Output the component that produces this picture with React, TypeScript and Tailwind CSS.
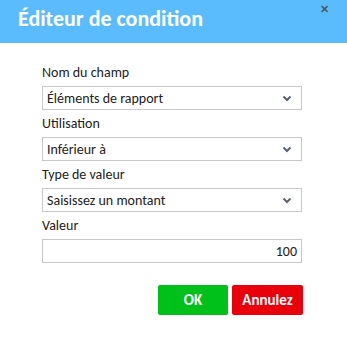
import React from 'react';

const font = { fontFamily: 'Carlito, Lato, "Open Sans", sans-serif' };

function Chevron() {
  return (
    <svg width="10" height="7" viewBox="0 0 10 7" className="text-[#5a6470]">
      <path d="M1.5 1.5 L5 5 L8.5 1.5" fill="none" stroke="currentColor" strokeWidth="2" />
    </svg>
  );
}

function SelectField({ label, value }: { label: string; value: string }) {
  return (
    <div className="flex flex-col">
      <div className="h-[22px] text-[14px] leading-[22px] text-[#222]">{label}</div>
      <div className="mt-[2px] h-[24px] border border-[#c8c8c8] bg-white flex items-center justify-between pl-[4px] pr-[9px]">
        <span className="text-[14px] text-[#222]">{value}</span>
        <Chevron />
      </div>
    </div>
  );
}

export default function App() {
  return (
    <div className="w-[347px] h-[343px] bg-white overflow-hidden" style={font}>
      <header className="h-[43px] bg-[#5bbcfd] flex items-start justify-between pl-[18px] pr-[18px]">
        <h1 className="text-[22px] font-bold text-white leading-none mt-[8px]">Éditeur de condition</h1>
        <span className="text-[#4a5a68] text-[11px] font-bold leading-none mt-[4px]">✕</span>
      </header>
      <div className="ml-[42px] pt-[19px] flex flex-col gap-[3px] w-[260px]">
        <SelectField label="Nom du champ" value="Éléments de rapport" />
        <SelectField label="Utilisation" value="Inférieur à" />
        <SelectField label="Type de valeur" value="Saisissez un montant" />
        <div className="flex flex-col">
          <div className="h-[22px] text-[14px] leading-[22px] text-[#222]">Valeur</div>
          <div className="mt-[2px] h-[24px] border border-[#c8c8c8] bg-white flex items-center justify-end pr-[4px]">
            <span className="text-[14px] text-[#222]">100</span>
          </div>
        </div>
      </div>
      <div className="flex justify-end gap-[4px] pr-[44px] mt-[22px]">
        <button className="w-[70px] h-[30px] rounded-[2px] bg-[#00c01a] text-white font-bold text-[15px]">OK</button>
        <button className="w-[71px] h-[30px] rounded-[2px] bg-[#e8000b] text-white font-bold text-[15px]">Annulez</button>
      </div>
    </div>
  );
}
